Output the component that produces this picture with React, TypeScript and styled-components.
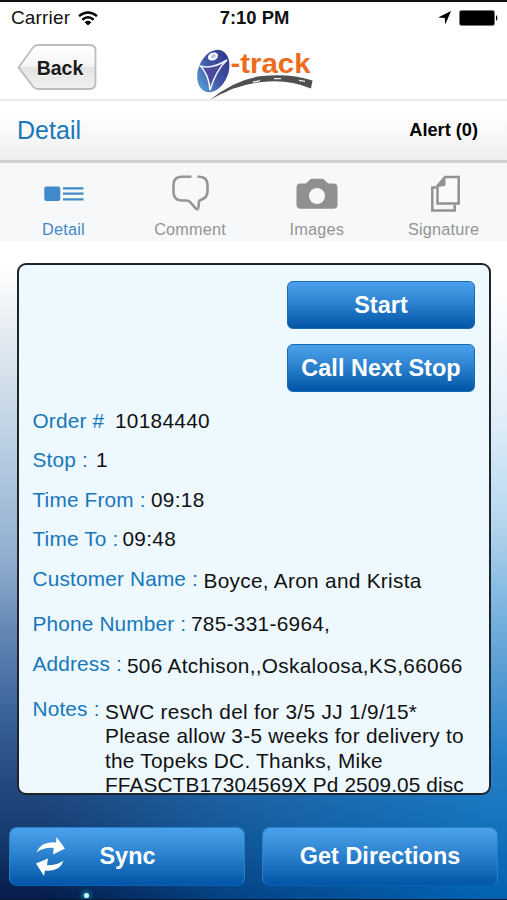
import React from 'react';
import styled, { createGlobalStyle } from 'styled-components';

const Global = createGlobalStyle`
  * { box-sizing: border-box; }
  body { margin: 0; font-family: "Liberation Sans", Arial, sans-serif; color: #111; }
`;

const Screen = styled.div`
  width: 507px;
  height: 900px;
  overflow: hidden;
  display: flex;
  flex-direction: column;
  background: #fff;
  border-top: 2px solid #111;
  border-bottom: 1px solid #061a30;
`;

const StatusBar = styled.div`
  height: 32px;
  flex: none;
  display: grid;
  grid-template-columns: 1fr 1fr 1fr;
  align-items: center;
  padding: 0 9px 0 11px;
`;

const StatusGroup = styled.div<{ $align?: string }>`
  display: flex;
  align-items: center;
  gap: 8px;
  justify-content: ${(p) => p.$align || 'flex-start'};
`;

const StatusText = styled.span<{ $bold?: boolean }>`
  font-size: ${(p) => (p.$bold ? '18.4px' : '19px')};
  line-height: 22px;
  letter-spacing: ${(p) => (p.$bold ? '0' : '0.15px')};
  font-weight: ${(p) => (p.$bold ? 700 : 400)};
  white-space: nowrap;
`;

const Header = styled.header`
  height: 67px;
  flex: none;
  display: flex;
  align-items: flex-start;
  padding: 10px 0 0 16px;
  border-bottom: 2px solid #ededed;
`;

const BackButton = styled.button`
  display: grid;
  width: 82px;
  height: 50px;
  padding: 0;
  border: 0;
  background: none;
  font: 700 19.5px "Liberation Sans", Arial, sans-serif;
  color: #1a1a1a;
  > * { grid-area: 1 / 1; }
`;

const BackLabel = styled.span`
  align-self: center;
  padding: 0 0 2px 6px;
  text-align: center;
  text-shadow: 0 1px 0 #fff;
`;

const Logo = styled.svg`
  display: block;
  margin-left: 92px;
`;

const TitleBar = styled.div`
  height: 62px;
  flex: none;
  display: flex;
  align-items: center;
  justify-content: space-between;
  padding: 0 29px 0 17px;
  background: linear-gradient(#fff 10%, #f9f9f9 55%, #eeeeee);
  border-bottom: 3px solid #d1d1d1;
`;

const Title = styled.h1`
  margin: 0;
  font-size: 25px;
  font-weight: 400;
  letter-spacing: 0.05px;
  color: #1777bb;
`;

const Alert = styled.span`
  font-size: 18.2px;
  font-weight: 700;
  color: #000;
`;

const Tabs = styled.nav`
  height: 78px;
  flex: none;
  display: grid;
  grid-template-columns: repeat(4, 1fr);
  background: #f7f8f9;
`;

const Tab = styled.div<{ $active?: boolean }>`
  display: flex;
  flex-direction: column;
  align-items: center;
  padding-top: 8px;
  color: ${(p) => (p.$active ? '#4089c9' : '#949494')};
  font-size: 16.3px;
  letter-spacing: 0.2px;
  line-height: 20px;
  svg { display: block; margin-bottom: 7px; }
`;

const Content = styled.main`
  position: relative;
  isolation: isolate;
  flex: 1;
  display: flex;
  flex-direction: column;
  padding: 22px 9px 0 9px;
  background: linear-gradient(#fff 5%, #e3f0fa 26%, #b8d8ef 42%, #84b9e1 54%, #5199d3 67%, #2480c8 79%, #1472bd 89%, #0262b3 100%);
  &::before {
    content: "";
    position: absolute;
    inset: 0;
    z-index: -1;
    background: linear-gradient(#fff 4%, #d5e1eb 20%, #b8cde2 32%, #8facd0 49%, #6388b3 59%, #3c659d 71%, #254b82 81%, #163d72 90%, #061b49 100%);
    mask-image: linear-gradient(90deg, #000 8%, rgba(0, 0, 0, 0.45) 45%, transparent 95%);
  }
`;

const Panel = styled.section`
  height: 532px;
  margin: 0 7px 0 8px;
  padding: 16px 14px 0;
  overflow: hidden;
  border: 2px solid #20252a;
  border-radius: 9px;
  background: #edf8ff;
`;

const Actions = styled.div`
  display: flex;
  flex-direction: column;
  align-items: flex-end;
  gap: 15px;
  margin-bottom: 9px;
`;

const BlueButton = styled.button`
  width: 188px;
  height: 48px;
  padding: 0;
  border: 1px solid #1769b3;
  border-radius: 6px;
  background: linear-gradient(#4ba1eb, #2d83cf 45%, #0255a7);
  color: #fff;
  font: 700 23.4px "Liberation Sans", Arial, sans-serif;
  letter-spacing: 0.05px;
  white-space: nowrap;
`;

const Row = styled.div<{ $h: number }>`
  display: flex;
  height: ${(p) => p.$h}px;
  font-size: 20.8px;
  line-height: 24.4px;
  white-space: nowrap;
`;

const Label = styled.span<{ $w: number }>`
  flex: none;
  width: ${(p) => p.$w}px;
  margin-left: -0.5px;
  letter-spacing: 0.17px;
  color: #1777bb;
`;

const Value = styled.div<{ $drop?: number }>`
  padding-top: ${(p) => p.$drop || 0}px;
  letter-spacing: 0.3px;
`;

const NoteLine = styled.div<{ $tracking: number }>`
  letter-spacing: ${(p) => p.$tracking}px;
`;

const Footer = styled.footer`
  display: flex;
  gap: 17px;
  margin-top: 32px;
`;

const FooterButton = styled(BlueButton)`
  flex: 1;
  height: 59px;
  border-color: #277fc8;
  border-bottom-color: #0962b3;
  border-radius: 8px;
  display: flex;
  align-items: center;
  justify-content: center;
`;

const SyncIcon = styled.svg`
  margin: 0 34px 0 -62px;
`;

const Spark = styled.i`
  width: 5px;
  height: 5px;
  margin: 7px 0 0 75px;
  border-radius: 50%;
  background: #c9ffff;
  box-shadow: 0 0 4px 2px #15799c;
`;

const notes = [
  { text: 'SWC resch del for 3/5 JJ 1/9/15*', tracking: 0.33 },
  { text: 'Please allow 3-5 weeks for delivery to', tracking: 0.29 },
  { text: 'the Topeks DC. Thanks, Mike', tracking: 0.26 },
  { text: 'FFASCTB17304569X Pd 2509.05 disc', tracking: 0.12 },
];

const rows = [
  { label: 'Order #', value: '10184440', w: 82.5, h: 39 },
  { label: 'Stop :', value: '1', w: 63.5, h: 40 },
  { label: 'Time From :', value: '09:18', w: 118.5, h: 39 },
  { label: 'Time To :', value: '09:48', w: 90, h: 40 },
  { label: 'Customer Name :', value: 'Boyce, Aron and Krista', w: 171, h: 45, drop: 2 },
  { label: 'Phone Number :', value: '785-331-6964,', w: 158.5, h: 40 },
  { label: 'Address :', value: '506 Atchison,,Oskaloosa,KS,66066', w: 94.5, h: 45, drop: 2 },
];

export default function App() {
  return (
    <>
      <Global />
      <Screen>
        <StatusBar>
          <StatusGroup>
            <StatusText>Carrier</StatusText>
            <svg width="20" height="15" viewBox="0 0 20 15" fill="none" stroke="#000" strokeWidth="2.4">
              <path d="M1 5.2Q10-2.4 19 5.2M4.3 8.7Q10 4 15.7 8.7" />
              <path d="M6.7 11.2Q10 8.4 13.3 11.2L10 14.5Z" fill="#000" stroke="none" />
            </svg>
          </StatusGroup>
          <StatusGroup $align="center"><StatusText $bold>7:10 PM</StatusText></StatusGroup>
          <StatusGroup $align="flex-end">
            <svg width="13" height="14" viewBox="0 0 13 14"><path d="M13 0L7.3 13.5 6.7 7 0 6.5Z" /></svg>
            <svg width="39" height="16" viewBox="0 0 39 16">
              <rect x=".5" y=".5" width="35" height="15" rx="2" stroke="#777" />
              <path d="M37 5Q40 8 37 11Z" />
            </svg>
          </StatusGroup>
        </StatusBar>

        <Header>
          <BackButton>
            <svg width="82" height="50" viewBox="0 0 82 50">
              <defs>
                <linearGradient id="back" x2="0" y2="1">
                  <stop stopColor="#fff" /><stop offset=".49" stopColor="#f4f4f4" />
                  <stop offset=".51" stopColor="#e4e4e4" /><stop offset="1" stopColor="#f0f0f0" />
                </linearGradient>
              </defs>
              <path d="M2.5 23.5L17 3.5Q18.8 1 22 1H74Q79.5 1 79.5 6.5V39Q79.5 45 74 45H22Q18.8 45 17 42.5Z" fill="url(#back)" stroke="#bcbcbc" strokeWidth="1.8" />
            </svg>
            <BackLabel>Back</BackLabel>
          </BackButton>
          <Logo width="130" height="56" viewBox="190 44 130 56">
            <defs>
              <linearGradient id="orb" x1=".7" y1="0" x2=".2" y2="1">
                <stop stopColor="#30388f" /><stop offset=".5" stopColor="#4355a5" /><stop offset="1" stopColor="#58a7da" />
              </linearGradient>
            </defs>
            <ellipse cx="213.3" cy="71" rx="15" ry="22" transform="rotate(22 213.3 71)" fill="url(#orb)" />
            <ellipse cx="213" cy="56.5" rx="5.2" ry="3.8" transform="rotate(-25 213 56.5)" fill="#fff" />
            <ellipse cx="213.5" cy="56.3" rx="2.6" ry="1.9" transform="rotate(-25 213.5 56.3)" fill="#b9c4e8" />
            <path d="M200.5 66Q212 69.5 227 60Q216 70 210 90Q209 75 200.5 66Z" fill="#4c4b9b" stroke="#eef4ff" strokeWidth="1.6" />
            <text x="230.5" y="72.5" fontFamily="Liberation Sans" fontWeight="700" fontSize="28.5" textLength="80" lengthAdjust="spacingAndGlyphs" fill="#ec6b1c">-track</text>
            <path d="M210 99.8Q236 79 262 76Q290 73 312.5 80.5L311 88.5Q288 79 262 82Q238 84 210 99.8Z" fill="#505050" />
            <path d="M228 91.5l7-3M253 82l7-1.4M274 78.6l7 .1M299 80.4l6 1" stroke="#eee" strokeWidth="1.3" />
          </Logo>
        </Header>

        <TitleBar><Title>Detail</Title><Alert>Alert (0)</Alert></TitleBar>

        <Tabs>
          <Tab $active>
            <svg width="42" height="41" viewBox="0 0 42 41">
              <rect x="2.3" y="15.5" width="16" height="14.5" rx="2" fill="#428bca" />
              <path d="M21 17.3h20.5M21 22.7h20.5M21 28.3h20.5" stroke="#428bca" strokeWidth="2.3" />
            </svg>
            Detail
          </Tab>
          <Tab>
            <svg width="42" height="41" viewBox="0 0 42 41" fill="none" stroke="#969696" strokeWidth="2.6">
              <path d="M22.5 5.7H13Q4.5 5.7 4.5 14V21Q4.5 29.5 13 29.5H17.5Q19.5 29.5 21 31L26 36.7Q28 39.2 29 37.5Q30 35.5 29.8 31.5Q29.8 29.5 31.5 29Q38.5 27 38.5 20V14Q38.5 6 30.5 5.7H28.5" />
            </svg>
            Comment
          </Tab>
          <Tab>
            <svg width="42" height="41" viewBox="0 0 42 41" fill="#909090">
              <path fillRule="evenodd" d="M4.5 12.5H10L13.5 9Q14.5 7.7 16.5 7.7H25.5Q27.5 7.7 28.5 9L32 12.5H37.5Q41.5 12.5 41.5 16.5V34Q41.5 37.7 37.5 37.7H4.5Q.5 37.7.5 34V16.5Q.5 12.5 4.5 12.5ZM21 17A8 8 0 1 0 21 33A8 8 0 1 0 21 17Z" />
            </svg>
            Images
          </Tab>
          <Tab>
            <svg width="42" height="41" viewBox="0 0 42 41" fill="none" stroke="#929292" strokeWidth="2.5">
              <path d="M13.5 16.5H9.3V39.5H31.7V33.7" />
              <path d="M14.5 32.5V15L22 6H35.7V32.5Z" fill="#fafafa" />
              <path d="M14.5 15.5L22 6.5V14.5Z" fill="#929292" strokeWidth="1" />
            </svg>
            Signature
          </Tab>
        </Tabs>

        <Content>
          <Panel>
            <Actions>
              <BlueButton>Start</BlueButton>
              <BlueButton>Call Next Stop</BlueButton>
            </Actions>
            <Row $h={8} />
            {rows.map((r) => (
              <Row key={r.label} $h={r.h}>
                <Label $w={r.w}>{r.label}</Label>
                <Value $drop={r.drop}>{r.value}</Value>
              </Row>
            ))}
            <Row $h={100}>
              <Label $w={72.5}>Notes :</Label>
              <Value $drop={3}>
                {notes.map((n) => <NoteLine key={n.text} $tracking={n.tracking}>{n.text}</NoteLine>)}
              </Value>
            </Row>
          </Panel>
          <Footer>
            <FooterButton>
              <SyncIcon width="29" height="39" viewBox="0 0 29 39" fill="#fff">
                <path d="M.5 15.5Q5 4 20 5.5L20.5 0L29 11.5L17 17.5L17.7 11Q8 10 .5 15.5Z" />
                <path d="M27.5 23.5Q24 35 9 33.5L8 39L0 26.5L12 21.5L11 28Q20 29 27.5 23.5Z" />
              </SyncIcon>
              Sync
            </FooterButton>
            <FooterButton>Get Directions</FooterButton>
          </Footer>
          <Spark />
        </Content>
      </Screen>
    </>
  );
}
